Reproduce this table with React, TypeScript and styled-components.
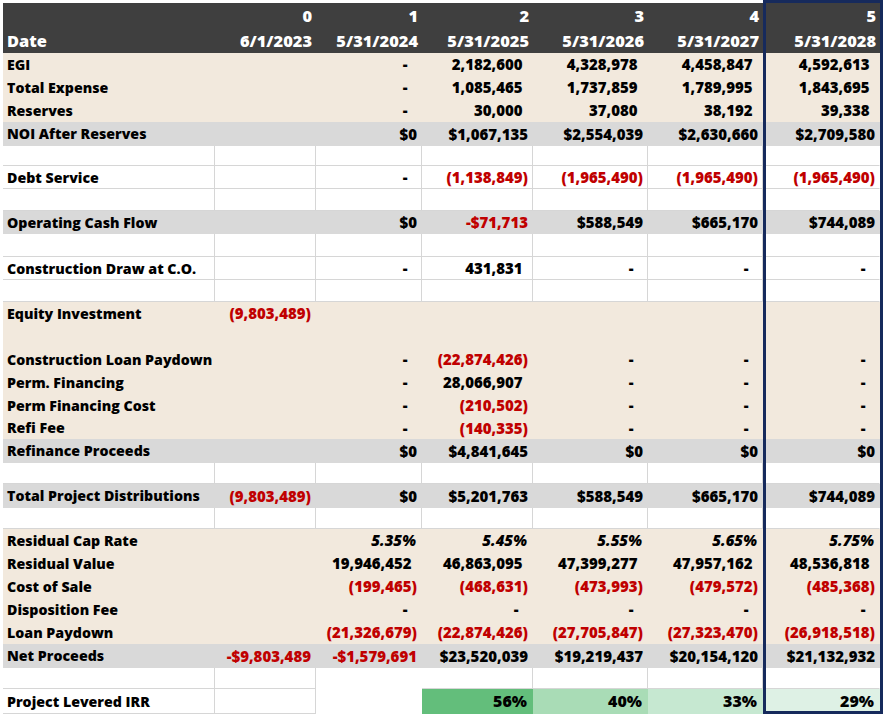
import React from "react";
import styled, { createGlobalStyle } from "styled-components";

const Global = createGlobalStyle`
  html, body { margin: 0; padding: 0; background: #ffffff; }
  body { font-family: "Open Sans", "Noto Sans", "Liberation Sans", sans-serif; }
`;

const COLS = "212px 101px 106px 111px 115px 115px 117px";
const GRID = "#d6d6d6";
const BEIGE = "#f2e9dd";
const GRAY = "#d9d9d9";
const RED = "#c00000";

type Fill = "beige" | "gray" | "white";
type Kind = "num" | "neg" | "cur" | "curneg" | "dash" | "pct" | "irr" | "empty";
type CellData = { v?: string; k: Kind; bg?: string; plain?: boolean };

const fillColor = (f: Fill) => (f === "beige" ? BEIGE : f === "gray" ? GRAY : "#ffffff");

const Page = styled.div`
  padding: 3px 0 0 3px;
`;

const Sheet = styled.div`
  position: relative;
  width: 877px;
  font-weight: 800;
  font-size: 14.2px;
  color: #000;
`;

const Header = styled.div`
  display: grid;
  grid-template-columns: ${COLS};
  background: #3f3f3f;
  color: #ffffff;
  height: 50px;
  font-size: 16.4px;
`;

const HeadCell = styled.div<{ $left?: boolean }>`
  display: grid;
  grid-template-rows: 25px 25px;
  text-align: ${(p) => (p.$left ? "left" : "right")};
  padding: ${(p) => (p.$left ? "0 0 0 4px" : "0 4px 0 0")};
  span {
    line-height: 25px;
    white-space: nowrap;
  }
`;

const Row = styled.div<{ $h: number; $fill: Fill }>`
  display: grid;
  grid-template-columns: ${COLS};
  height: ${(p) => p.$h}px;
  background: ${(p) => fillColor(p.$fill)};
`;

const sizeFor = (label?: boolean, kind?: Kind) => (label ? "14.2px" : kind === "irr" ? "16px" : "15px");

const Cell = styled.div<{ $grid: boolean; $bg?: string; $label?: boolean; $kind?: Kind; $last?: boolean }>`
  box-sizing: border-box;
  display: flex;
  align-items: center;
  justify-content: ${(p) => (p.$label ? "flex-start" : "flex-end")};
  padding: ${(p) => (p.$label ? "0 0 0 4px" : p.$kind === "pct" || p.$kind === "irr" ? "0 5px 0 0" : "0 4px 0 0")};
  white-space: nowrap;
  font-size: ${(p) => sizeFor(p.$label, p.$kind)};
  background: ${(p) => p.$bg || "transparent"};
  border-right: 1px solid ${(p) => (p.$grid && !p.$last ? GRID : "transparent")};
  border-bottom: 1px solid ${(p) => (p.$grid ? GRID : "transparent")};
  color: ${(p) => (p.$kind === "neg" || p.$kind === "curneg" ? RED : "#000")};
  font-style: ${(p) => (p.$kind === "pct" ? "italic" : "normal")};
`;

const Ghost = styled.span`
  visibility: hidden;
`;

const DashPad = styled.span`
  display: inline-block;
  width: 4px;
`;

const Frame = styled.div`
  position: absolute;
  left: 760px;
  top: -3px;
  width: 120px;
  height: 714px;
  box-sizing: border-box;
  border: 3px solid #162a5c;
  pointer-events: none;
`;

type RowData = { label?: string; fill: Fill; h: number; cells: CellData[] };

const n = (v: string): CellData => ({ v, k: "num" });
const ng = (v: string): CellData => ({ v, k: "neg" });
const c = (v: string): CellData => ({ v, k: "cur" });
const cn = (v: string): CellData => ({ v, k: "curneg" });
const d: CellData = { k: "dash" };
const e: CellData = { k: "empty" };
const p = (v: string): CellData => ({ v, k: "pct" });
const irr = (v: string, bg: string): CellData => ({ v, k: "irr", bg });

const blank = (fill: Fill, h: number): RowData => ({ fill, h, cells: [e, e, e, e, e, e] });

const rows: RowData[] = [
  { label: "EGI", fill: "beige", h: 23, cells: [e, d, n("2,182,600"), n("4,328,978"), n("4,458,847"), n("4,592,613")] },
  { label: "Total Expense", fill: "beige", h: 23, cells: [e, d, n("1,085,465"), n("1,737,859"), n("1,789,995"), n("1,843,695")] },
  { label: "Reserves", fill: "beige", h: 23, cells: [e, d, n("30,000"), n("37,080"), n("38,192"), n("39,338")] },
  { label: "NOI After Reserves", fill: "gray", h: 24, cells: [e, c("$0"), c("$1,067,135"), c("$2,554,039"), c("$2,630,660"), c("$2,709,580")] },
  blank("white", 20),
  { label: "Debt Service", fill: "white", h: 23, cells: [e, d, ng("(1,138,849)"), ng("(1,965,490)"), ng("(1,965,490)"), ng("(1,965,490)")] },
  blank("white", 22),
  { label: "Operating Cash Flow", fill: "gray", h: 23, cells: [e, c("$0"), cn("-$71,713"), c("$588,549"), c("$665,170"), c("$744,089")] },
  blank("white", 23),
  { label: "Construction Draw at C.O.", fill: "white", h: 23, cells: [e, d, n("431,831"), d, d, d] },
  blank("white", 22),
  { label: "Equity Investment", fill: "beige", h: 23, cells: [ng("(9,803,489)"), e, e, e, e, e] },
  blank("beige", 23),
  { label: "Construction Loan Paydown", fill: "beige", h: 23, cells: [e, d, ng("(22,874,426)"), d, d, d] },
  { label: "Perm. Financing", fill: "beige", h: 23, cells: [e, d, n("28,066,907"), d, d, d] },
  { label: "Perm Financing Cost", fill: "beige", h: 23, cells: [e, d, ng("(210,502)"), d, d, d] },
  { label: "Refi Fee", fill: "beige", h: 22, cells: [e, d, ng("(140,335)"), d, d, d] },
  { label: "Refinance Proceeds", fill: "gray", h: 24, cells: [e, c("$0"), c("$4,841,645"), c("$0"), c("$0"), c("$0")] },
  blank("white", 21),
  { label: "Total Project Distributions", fill: "gray", h: 24, cells: [ng("(9,803,489)"), c("$0"), c("$5,201,763"), c("$588,549"), c("$665,170"), c("$744,089")] },
  blank("white", 21),
  { label: "Residual Cap Rate", fill: "beige", h: 23, cells: [e, p("5.35%"), p("5.45%"), p("5.55%"), p("5.65%"), p("5.75%")] },
  { label: "Residual Value", fill: "beige", h: 23, cells: [e, n("19,946,452"), n("46,863,095"), n("47,399,277"), n("47,957,162"), n("48,536,818")] },
  { label: "Cost of Sale", fill: "beige", h: 23, cells: [e, ng("(199,465)"), ng("(468,631)"), ng("(473,993)"), ng("(479,572)"), ng("(485,368)")] },
  { label: "Disposition Fee", fill: "beige", h: 23, cells: [e, d, d, d, d, d] },
  { label: "Loan Paydown", fill: "beige", h: 23, cells: [e, ng("(21,326,679)"), ng("(22,874,426)"), ng("(27,705,847)"), ng("(27,323,470)"), ng("(26,918,518)")] },
  { label: "Net Proceeds", fill: "gray", h: 24, cells: [cn("-$9,803,489"), cn("-$1,579,691"), c("$23,520,039"), c("$19,219,437"), c("$20,154,120"), c("$21,132,932")] },
  { fill: "white", h: 21, cells: [e, { k: "empty", plain: true }, e, e, e, e] },
  {
    label: "Project Levered IRR",
    fill: "white",
    h: 25,
    cells: [e, { k: "empty", plain: true }, irr("56%", "#63be7b"), irr("40%", "#a9dcb6"), irr("33%", "#c6e8d1"), irr("29%", "#def1e5")],
  },
];

const Value: React.FC<{ cell: CellData }> = ({ cell }) => {
  if (cell.k === "empty") return null;
  if (cell.k === "dash")
    return (
      <>
        -<Ghost>)</Ghost>
        <DashPad />
      </>
    );
  if (cell.k === "num")
    return (
      <>
        {cell.v}
        <Ghost>)</Ghost>
      </>
    );
  return <>{cell.v}</>;
};

const heads = [
  ["0", "6/1/2023"],
  ["1", "5/31/2024"],
  ["2", "5/31/2025"],
  ["3", "5/31/2026"],
  ["4", "5/31/2027"],
  ["5", "5/31/2028"],
];

export default function App() {
  return (
    <Page>
      <Global />
      <Sheet>
        <Header>
          <HeadCell $left>
            <span />
            <span>Date</span>
          </HeadCell>
          {heads.map(([a, b]) => (
            <HeadCell key={a}>
              <span>{a}</span>
              <span>{b}</span>
            </HeadCell>
          ))}
        </Header>
        {rows.map((r, i) => {
          const white = r.fill === "white";
          return (
            <Row key={i} $h={r.h} $fill={r.fill}>
              <Cell $label $grid={white}>
                {r.label}
              </Cell>
              {r.cells.map((cell, j) => (
                <Cell
                  key={j}
                  $grid={white && !cell.bg && !cell.plain}
                  $bg={cell.bg}
                  $kind={cell.k}
                  $last={j === 5}
                >
                  <Value cell={cell} />
                </Cell>
              ))}
            </Row>
          );
        })}
        <Frame />
      </Sheet>
    </Page>
  );
}
